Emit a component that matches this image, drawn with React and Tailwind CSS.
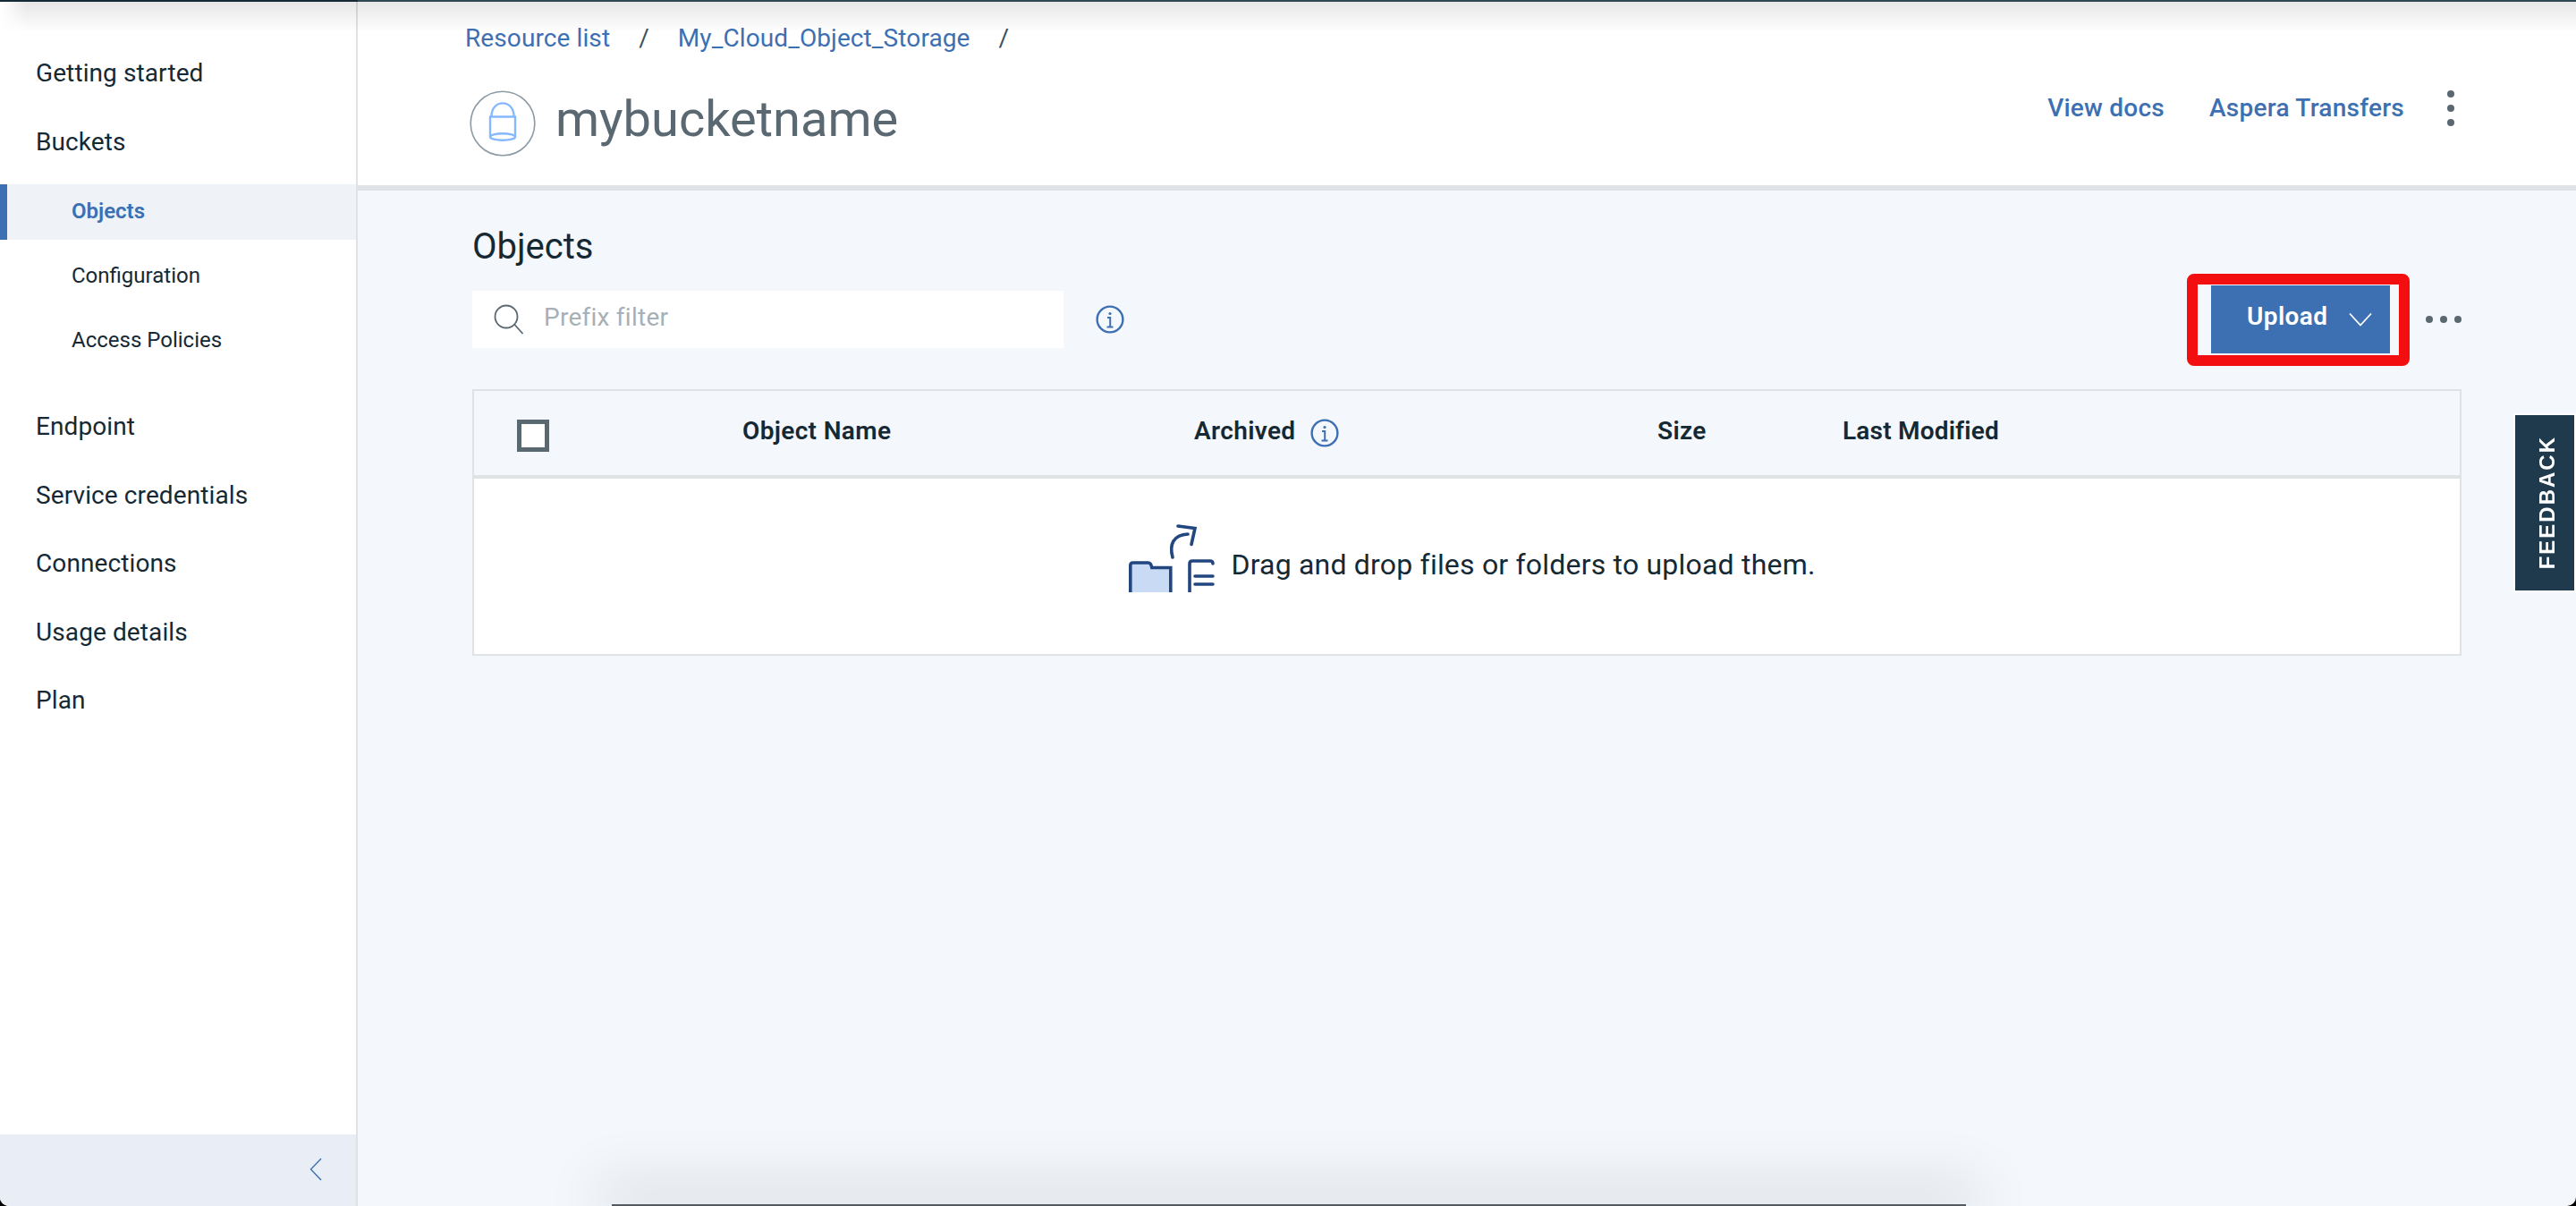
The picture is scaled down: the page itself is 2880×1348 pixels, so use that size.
import React from "react";

const sans = "font-['Roboto','Noto_Sans',sans-serif]";

const InfoIcon = ({ className }) => (
  <svg viewBox="0 0 32 32" className={className} fill="none" stroke="#3d70b2" strokeWidth="2.4">
    <circle cx="16" cy="16" r="14.4" />
    <circle cx="16" cy="9.5" r="1.6" fill="#3d70b2" stroke="none" />
    <path d="M13 14h3.2v10M12.5 24.4h7" strokeWidth="2" />
  </svg>
);

const NavItem = ({ label, sub, className = "" }) => (
  <div
    className={`flex items-center ${
      sub ? "h-[72px] pl-[80px] text-[24px]" : "h-[76.5px] pl-[40px] text-[28px] tracking-[0.1px]"
    } text-[#152935] ${className}`}
  >
    {label}
  </div>
);

export default function App() {
  return (
    <div className={`h-screen w-full overflow-hidden bg-black ${sans}`}>
      <div className="relative flex h-full overflow-hidden rounded-b-[10px] bg-[#f4f7fb]">
        {/* Sidebar */}
        <aside className="flex h-full w-[400px] shrink-0 flex-col border-r-2 border-[#dfe3e6] bg-white">
          <nav className="flex-1 pt-[44px]">
            <NavItem label="Getting started" />
            <NavItem label="Buckets" />
            <div className="mt-[9px] flex h-[62px] items-center border-l-8 border-[#3d70b2] bg-[#eff2f6] pb-[3px] pl-[72px] text-[24px] font-semibold text-[#3d70b2]">
              Objects
            </div>
            <NavItem label="Configuration" sub className="mt-[4px]" />
            <NavItem label="Access Policies" sub />
            <NavItem label="Endpoint" className="mt-[23px]" />
            <NavItem label="Service credentials" />
            <NavItem label="Connections" />
            <NavItem label="Usage details" />
            <NavItem label="Plan" />
          </nav>
          <div className="flex h-[80px] items-center justify-end bg-[#e9eef6] pb-[2px] pr-[38px]">
            <svg viewBox="0 0 14 26" className="h-[26px] w-[14px]" fill="none" stroke="#3d70b2" strokeWidth="1.4">
              <path d="M13 1 1.5 13 13 25" />
            </svg>
          </div>
        </aside>

        {/* Main column */}
        <main className="flex min-w-0 flex-1 flex-col">
          <header className="flex h-[213px] shrink-0 justify-between border-b-[6px] border-[#dfe3e6] bg-white pl-[120px] pr-[136px]">
            <div>
              <div className="flex h-[82px] items-center pt-[3px] text-[28px] tracking-[0.1px] text-[#3d70b2]">
                <span>Resource list</span>
                <span className="ml-[32px] text-[#3d4f5b]">/</span>
                <span className="ml-[32px]">My_Cloud_Object_Storage</span>
                <span className="ml-[32px] text-[#3d4f5b]">/</span>
              </div>
              <div className="mt-[19px] flex items-center pl-[5px]">
                <svg viewBox="0 0 74 74" className="h-[74px] w-[74px]" fill="none">
                  <circle cx="37" cy="37" r="35.8" stroke="#8c9ba5" strokeWidth="1.6" />
                  <g stroke="#85b8ff" strokeWidth="2.4">
                    <path d="M24.5 29C24.5 9.5 49.5 9.5 49.5 29M22 29.5h30M23 29v23M51 29v23" />
                    <ellipse cx="37" cy="52" rx="14" ry="3.8" />
                  </g>
                </svg>
                <h1 className="mb-[10px] ml-[22px] text-[56px] font-normal leading-none text-[#5a6872]">mybucketname</h1>
              </div>
            </div>
            <div className="flex h-[206px] items-center pt-[36px] text-[28px] font-medium tracking-[0.25px] text-[#3d70b2]">
              <span>View docs</span>
              <span className="ml-[50px]">Aspera Transfers</span>
              <div className="ml-[48px] flex flex-col gap-[8px]">
                <span className="size-[8px] rounded-full bg-[#5a6872]" />
                <span className="size-[8px] rounded-full bg-[#5a6872]" />
                <span className="size-[8px] rounded-full bg-[#5a6872]" />
              </div>
            </div>
          </header>

          <section className="flex-1 pl-[128px] pr-[128px] pt-[40px]">
            <h2 className="flex h-[46px] items-center text-[40px] font-normal text-[#152935]">Objects</h2>

            <div className="mt-[20px] flex h-[76px] items-center">
              <div className="flex h-[64px] w-[661px] items-center bg-white pl-[24px]">
                <svg viewBox="0 0 34 34" className="h-[34px] w-[34px]" fill="none" stroke="#5a6872" strokeWidth="1.8">
                  <circle cx="14" cy="14" r="12.5" />
                  <path d="m23.5 23 9 10" />
                </svg>
                <span className="ml-[22px] pb-[4px] text-[28px] tracking-[0.25px] text-[#a7b0b7]">Prefix filter</span>
              </div>
              <InfoIcon className="ml-[36px] h-[32px] w-[32px]" />
              <div className="ml-auto flex items-center">
                <div className="relative flex h-[76px] w-[200px] items-center bg-[#3d70b2] pb-[6px] pl-[40px] text-[28px] font-semibold tracking-[0.4px] text-white">
                  Upload
                  <svg viewBox="0 0 26 16" className="ml-[24px] mt-[6px] h-[16px] w-[26px]" fill="none" stroke="#fff" strokeWidth="1.8">
                    <path d="m1 1.5 12 13 12-13" />
                  </svg>
                  <span className="absolute left-[-27px] top-[-13px] h-[103px] w-[249px] rounded-[8px] border-[12px] border-[#f30f0f] blur-[0.6px]" />
                </div>
                <div className="ml-[40px] flex gap-[8px]">
                  <span className="size-[8px] rounded-full bg-[#5a6872]" />
                  <span className="size-[8px] rounded-full bg-[#5a6872]" />
                  <span className="size-[8px] rounded-full bg-[#5a6872]" />
                </div>
              </div>
            </div>

            <div className="mt-[40px] border-2 border-[#dfe3e6]">
              <div className="grid h-[98px] grid-cols-[300px_505px_518px_207px_1fr] items-center border-b-4 border-[#dfe3e6] pb-[4px] text-[28px] font-semibold tracking-[0.35px] text-[#152935]">
                <div className="pl-[48px] pt-[10px]">
                  <div className="size-[36px] border-[5px] border-[#5a6872] bg-white" />
                </div>
                <div>Object Name</div>
                <div className="flex items-center">
                  Archived
                  <InfoIcon className="ml-[16px] mt-[3px] h-[32px] w-[32px]" />
                </div>
                <div>Size</div>
                <div className="tracking-[0.2px]">Last Modified</div>
              </div>
              <div className="flex h-[196px] items-center justify-center bg-white pb-[4px] pl-[10px]">
                <svg viewBox="0 0 98 77" className="mb-[15px] h-[77px] w-[98px]" fill="none" stroke="#22467f" strokeWidth="3.6">
                  <path d="M3.8 78V47q0-3 3-3h17q3 0 4 5.5h21V78" fill="#c8daf4" />
                  <path d="M70 78V45q0-3 3-3h20q3 0 3 3" strokeLinecap="round" />
                  <path d="M76 59h20M76 68h20" strokeWidth="3.6" strokeLinecap="round" />
                  <path d="M51 38c-4-15 1-25 17-26M57 3l19 2.5-4 18" strokeLinecap="round" />
                </svg>
                <span className="ml-[18px] text-[32px] tracking-[0.2px] text-[#152935]">Drag and drop files or folders to upload them.</span>
              </div>
            </div>
          </section>
        </main>

        {/* Browser window shadows */}
        <div className="pointer-events-none absolute inset-x-0 top-0 h-[2px] bg-[#2e4650]">
          <div className="h-full w-[400px] bg-[#152935]" />
        </div>
        <div className="pointer-events-none absolute inset-x-0 top-[2px] h-[34px] bg-gradient-to-b from-black/10 to-transparent" />
        <div className="pointer-events-none absolute left-0 top-[2px] h-[34px] w-[30px] bg-gradient-to-r from-white to-transparent" />
        <div className="pointer-events-none absolute bottom-0 left-[684px] h-[2px] w-[1514px] bg-[#555a60] shadow-[0_-8px_64px_16px_rgba(0,0,0,0.13)]" />

        {/* Feedback tab */}
        <div className="absolute right-0 top-[462px] flex h-[200px] w-[70px] items-center justify-center border-2 border-white bg-[#1f3a4d] pl-[5px]">
          <span className="rotate-180 font-['Liberation_Sans',sans-serif] text-[24px] font-bold tracking-[2px] text-white [writing-mode:vertical-rl]">
            FEEDBACK
          </span>
        </div>
      </div>
    </div>
  );
}
